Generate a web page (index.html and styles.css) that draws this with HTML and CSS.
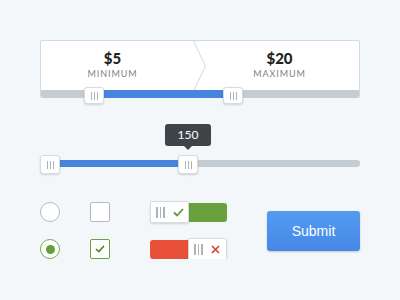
FILE: index.html
```html
<!DOCTYPE html>
<html>
<head>
<meta charset="utf-8">
<link rel="stylesheet" href="styles.css">
</head>
<body>
<div class="page">
  <div class="range-card">
    <div class="halves">
      <div class="half half-min">
        <div class="price">$5</div>
        <div class="label">MINIMUM</div>
      </div>
      <div class="half half-max">
        <div class="price">$20</div>
        <div class="label">MAXIMUM</div>
      </div>
      <svg class="chevron" width="14" height="50" viewBox="0 0 14 50"><path d="M0.5 0 L12.5 25 L0.5 50" fill="none" stroke="#d3d7db" stroke-width="1"/></svg>
    </div>
    <div class="track card-track">
      <div class="fill" style="left:63px;width:120px"></div>
      <div class="handle card-handle" style="left:43px"><span class="grip"><i></i><i></i><i></i></span></div>
      <div class="handle card-handle" style="left:182px"><span class="grip"><i></i><i></i><i></i></span></div>
    </div>
  </div>

  <div class="slider">
    <div class="track slide-track">
      <div class="fill" style="left:0;width:140px"></div>
      <div class="handle slide-handle" style="left:0"><span class="grip"><i></i><i></i><i></i></span></div>
      <div class="handle slide-handle" style="left:138px"><span class="grip"><i></i><i></i><i></i></span></div>
      <div class="tooltip" style="left:125px">150</div>
    </div>
  </div>

  <div class="controls">
    <span class="radio"></span>
    <span class="check"></span>
    <div class="toggle">
      <div class="knob"><span class="grip"><i></i><i></i><i></i></span><svg class="ico" width="11" height="9" viewBox="0 0 11 9"><path d="M1 4.5 L4 7.5 L10 1" fill="none" stroke="#5f9638" stroke-width="1.8"/></svg></div>
      <div class="bar bar-on"></div>
    </div>
    <div class="submit-cell"><button class="submit">Submit</button></div>
    <span class="radio radio-on"><span class="dot"></span></span>
    <span class="check check-on"><svg width="10" height="8" viewBox="0 0 10 8"><path d="M1 4 L3.8 6.6 L9 1" fill="none" stroke="#4f7f2d" stroke-width="1.6"/></svg></span>
    <div class="toggle">
      <div class="bar bar-off"></div>
      <div class="knob"><span class="grip"><i></i><i></i><i></i></span><svg class="ico" width="9" height="9" viewBox="0 0 9 9"><path d="M1 1 L8 8 M8 1 L1 8" fill="none" stroke="#d6412e" stroke-width="1.6"/></svg></div>
    </div>
  </div>
</div>
</body>
</html>
```
FILE: styles.css
```css
html, body {
  margin: 0;
  padding: 0;
  background: #f4f7fa;
  font-family: "Lato", "Open Sans", sans-serif;
}
.page {
  width: 320px;
  padding: 40px 40px 0 40px;
}
.range-card {
  background: #fff;
  border: 1px solid #d6dade;
  border-bottom: none;
  border-radius: 2px;
  height: 57px;
  display: flex;
  flex-direction: column;
}
.halves {
  position: relative;
  display: flex;
  height: 49px;
}
.half {
  display: flex;
  flex-direction: column;
  align-items: center;
  padding-top: 8px;
  box-sizing: border-box;
}
.half-min { width: 153px; padding-right: 10px; }
.half-max { flex: 1; padding-left: 6px; }
.price {
  font-size: 15px;
  font-weight: 900;
  line-height: 18px;
  color: #222;
}
.label {
  font-size: 9px;
  line-height: 12px;
  letter-spacing: 0.9px;
  color: #7d8288;
  margin-top: 1px;
}
.chevron {
  position: absolute;
  left: 152px;
  top: 0;
}
.track {
  position: relative;
  height: 8px;
  background: #c6cdd2;
}
.card-track {
  border-radius: 0 0 2px 2px;
}
.fill {
  position: absolute;
  top: 0;
  bottom: 0;
  background: #4684dd;
}
.handle {
  position: absolute;
  width: 20px;
  height: 18px;
  box-sizing: border-box;
  background: #fff;
  border: 1px solid #d7dbdf;
  border-radius: 3px;
  box-shadow: 0 1px 2px rgba(0,0,0,0.15);
  display: flex;
  align-items: center;
  justify-content: center;
}
.card-handle { top: -3px; height: 17px; }
.slide-handle { top: -5px; height: 19px; }
.grip {
  display: flex;
  gap: 2px;
}
.grip i {
  display: block;
  width: 1px;
  height: 8px;
  background: #aeb3b8;
}
.slider {
  margin-top: 62px;
}
.slide-track {
  height: 7px;
  border-radius: 3px;
  margin-top: 1px;
}
.slide-track .fill { border-radius: 3px 0 0 3px; }
.tooltip {
  position: absolute;
  top: -36px;
  width: 46px;
  height: 22px;
  background: #3e4448;
  border-radius: 3px;
  color: #fff;
  font-size: 12px;
  line-height: 22px;
  text-align: center;
}
.tooltip::after {
  content: "";
  position: absolute;
  left: 19px;
  bottom: -4px;
  border-left: 4px solid transparent;
  border-right: 4px solid transparent;
  border-top: 4px solid #3e4448;
}
.controls {
  margin-top: 35px;
  display: grid;
  grid-template-columns: 20px 20px 77px 93px;
  grid-template-rows: 20px 20px;
  column-gap: 30px;
  row-gap: 17px;
  align-items: center;
}
.controls > :nth-child(3), .controls > :nth-child(7) { margin-left: 10px; }
.submit-cell {
  grid-column: 4;
  grid-row: 1 / span 2;
  margin-left: 20px;
  align-self: center;
}
.radio {
  width: 20px;
  height: 20px;
  box-sizing: border-box;
  border: 1.5px solid #b4b9bf;
  border-radius: 50%;
  background: #fff;
  display: flex;
  align-items: center;
  justify-content: center;
}
.radio-on { border-color: #7aa956; }
.dot {
  width: 9px;
  height: 9px;
  border-radius: 50%;
  background: #63a03c;
}
.check {
  width: 20px;
  height: 20px;
  box-sizing: border-box;
  border: 1.5px solid #b4b9bf;
  border-radius: 2px;
  background: #fff;
  display: flex;
  align-items: center;
  justify-content: center;
}
.check-on { border-color: #6a9f43; }
.toggle {
  display: flex;
  align-items: center;
  width: 77px;
  height: 22px;
}
.knob {
  width: 39px;
  height: 22px;
  box-sizing: border-box;
  background: #fff;
  border: 1px solid #d7dbdf;
  border-radius: 2px;
  box-shadow: 0 1px 2px rgba(0,0,0,0.15);
  display: flex;
  align-items: center;
  padding-left: 5px;
  gap: 8px;
  position: relative;
  z-index: 1;
}
.knob .grip i { height: 11px; width: 1.5px; }
.bar {
  flex: 1;
  height: 19px;
}
.bar-on {
  background: #6aa13e;
  border-radius: 0 3px 3px 0;
}
.bar-off {
  background: #e8503a;
  border-radius: 3px 0 0 3px;
}
.submit {
  width: 93px;
  height: 40px;
  border: none;
  border-radius: 3px;
  background: linear-gradient(#539bf1, #4687e6);
  box-shadow: 0 1px 2px rgba(0,0,0,0.2);
  color: #fff;
  font-family: "Liberation Sans", Arial, sans-serif;
  font-size: 14px;
  padding: 0;
}
```
